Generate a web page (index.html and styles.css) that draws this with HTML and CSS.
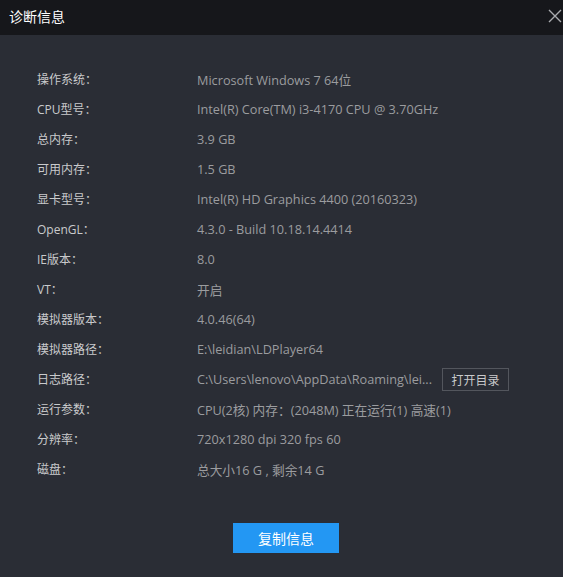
FILE: index.html
```html
<!DOCTYPE html>
<html lang="zh-CN">
<head>
<meta charset="utf-8">
<title>诊断信息</title>
<link rel="stylesheet" href="styles.css">
</head>
<body>
<div class="dialog">
  <div class="titlebar">
    <span class="title">诊断信息</span>
    <span class="close" aria-label="关闭">
      <svg width="14" height="14" viewBox="0 0 14 14"><path d="M1 1 L13 13 M13 1 L1 13" stroke="#a9abaf" stroke-width="1.4" fill="none"/></svg>
    </span>
  </div>
  <div class="content">
    <div class="rows">
      <div class="row"><span class="label">操作系统：</span><span class="value">Microsoft Windows 7 64位</span></div>
      <div class="row"><span class="label">CPU型号：</span><span class="value">Intel(R) Core(TM) i3-4170 CPU @ 3.70GHz</span></div>
      <div class="row"><span class="label">总内存：</span><span class="value">3.9 GB</span></div>
      <div class="row"><span class="label">可用内存：</span><span class="value">1.5 GB</span></div>
      <div class="row"><span class="label">显卡型号：</span><span class="value">Intel(R) HD Graphics 4400 (20160323)</span></div>
      <div class="row"><span class="label">OpenGL：</span><span class="value">4.3.0 - Build 10.18.14.4414</span></div>
      <div class="row"><span class="label">IE版本：</span><span class="value">8.0</span></div>
      <div class="row"><span class="label">VT：</span><span class="value">开启</span></div>
      <div class="row"><span class="label">模拟器版本：</span><span class="value">4.0.46(64)</span></div>
      <div class="row"><span class="label">模拟器路径：</span><span class="value">E:\leidian\LDPlayer64</span></div>
      <div class="row"><span class="label">日志路径：</span><span class="value path">C:\Users\lenovo\AppData\Roaming\lei...</span><button class="open-btn">打开目录</button></div>
      <div class="row"><span class="label">运行参数：</span><span class="value">CPU(2核) 内存：(2048M) 正在运行(1) 高速(1)</span></div>
      <div class="row"><span class="label">分辨率：</span><span class="value">720x1280 dpi 320 fps 60</span></div>
      <div class="row"><span class="label">磁盘：</span><span class="value">总大小16 G , 剩余14 G</span></div>
    </div>
    <div class="actions">
      <button class="copy-btn">复制信息</button>
    </div>
  </div>
</div>
</body>
</html>
```
FILE: styles.css
```css
* { box-sizing: border-box; }
html, body {
  margin: 0;
  padding: 0;
  background: #2a2d35;
}
body {
  font-family: "Open Sans", "Noto Sans CJK SC", sans-serif;
  font-size: 12px;
}
.dialog {
  width: 563px;
  height: 577px;
  display: flex;
  flex-direction: column;
  background: #2a2d35;
}
.titlebar {
  height: 35px;
  background: #16171b;
  display: flex;
  align-items: center;
  justify-content: space-between;
  padding: 0 1px 4px 9px;
}
.title {
  color: #ffffff;
  font-size: 14px;
  font-family: "Noto Sans CJK SC", sans-serif;
}
.close {
  display: flex;
  width: 14px;
  height: 14px;
}
.content {
  flex: 1;
  display: flex;
  flex-direction: column;
  padding: 29px 0 0 37px;
}
.rows {
  display: flex;
  flex-direction: column;
}
.row {
  height: 30px;
  display: flex;
  align-items: center;
}
.label {
  width: 160px;
  color: #c9cacc;
}
.value {
  color: #9b9c9f;
  font-size: 12.7px;
}
.path {
  width: 245px;
}
.open-btn {
  width: 67px;
  height: 23px;
  background: transparent;
  border: 1px solid #53565d;
  color: #c9cacc;
  font-family: "Noto Sans CJK SC", sans-serif;
  font-size: 12px;
  padding: 0;
}
.actions {
  display: flex;
  justify-content: center;
  padding: 39px 28px 0 0;
}
.copy-btn {
  width: 106px;
  height: 30px;
  background: #2397f3;
  border: none;
  color: #ffffff;
  font-family: "Noto Sans CJK SC", sans-serif;
  font-size: 14px;
  padding: 0;
}
```
